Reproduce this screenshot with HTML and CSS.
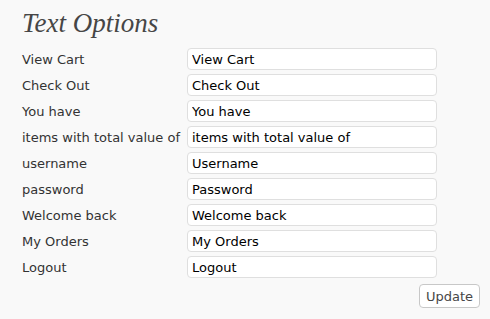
FILE: index.html
```html
<!DOCTYPE html>
<html lang="en">

<head>
    <meta charset="UTF-8">
    <title>Text Options</title>
    <link rel="stylesheet" href="styles.css">
</head>

<body>

    <div class="wrap">
        <h2 class="title">Text Options</h2>

        <form class="options">
            <label for="view-cart">View Cart</label>
            <input type="text" id="view-cart" value="View Cart">

            <label for="check-out">Check Out</label>
            <input type="text" id="check-out" value="Check Out">

            <label for="you-have">You have</label>
            <input type="text" id="you-have" value="You have">

            <label for="items">items with total value of</label>
            <input type="text" id="items" value="items with total value of">

            <label for="username">username</label>
            <input type="text" id="username" value="Username">

            <label for="password">password</label>
            <input type="text" id="password" value="Password">

            <label for="welcome">Welcome back</label>
            <input type="text" id="welcome" value="Welcome back">

            <label for="orders">My Orders</label>
            <input type="text" id="orders" value="My Orders">

            <label for="logout">Logout</label>
            <input type="text" id="logout" value="Logout">

            <div class="actions">
                <button type="button">Update</button>
            </div>
        </form>
    </div>

</body>

</html>
```

FILE: styles.css
```css
body {
    margin: 0;
    padding: 0;
    background-color: #f9f9f9;
    font-family: "DejaVu Sans", Verdana, sans-serif;
}

.wrap {
    padding: 8px 10px 0 22px;
}

.title {
    margin: 0 0 10px;
    font-family: "Liberation Serif", Georgia, serif;
    font-style: italic;
    font-weight: normal;
    font-size: 27px;
    line-height: 30px;
    color: #464646;
}

.options {
    display: grid;
    grid-template-columns: 165px 250px;
    row-gap: 4px;
    align-items: center;
}

label {
    font-size: 13px;
    color: #333;
}

input[type="text"] {
    box-sizing: border-box;
    width: 250px;
    height: 22px;
    margin: 0;
    padding: 0 4px;
    font-family: "DejaVu Sans", Verdana, sans-serif;
    font-size: 13px;
    color: #000;
    background-color: #fff;
    border: 1px solid #dfdfdf;
    border-radius: 4px;
}

.actions {
    grid-column: 1 / -1;
    display: flex;
    justify-content: flex-end;
    margin-right: -43px;
    padding-top: 2px;
}

button {
    height: 24px;
    padding: 0 6px;
    font-family: "DejaVu Sans", Verdana, sans-serif;
    font-size: 13px;
    color: #464646;
    background-color: #fff;
    border: 1px solid #c8c8c8;
    border-radius: 4px;
    cursor: pointer;
}
```
